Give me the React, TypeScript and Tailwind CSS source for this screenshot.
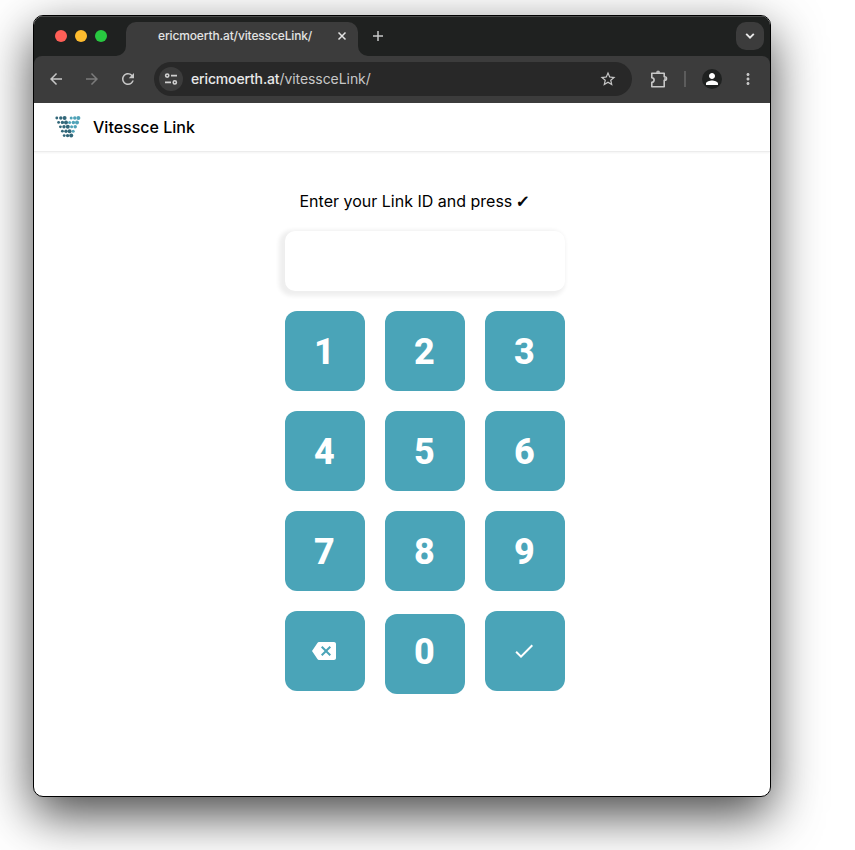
import React from "react";
import { MdBackspace, MdCheck, MdArrowBack, MdArrowForward, MdRefresh, MdStarBorder, MdMoreVert, MdPerson } from "react-icons/md";

const logoRows: [number, number[], number[]][] = [
  [2, [1.8, 5.8, 9.6], [16.2, 19.8, 23.4]],
  [6.4, [3.6, 7.4, 11], [14.6, 18.4, 22]],
  [10.8, [5.4, 9, 12.8], [16.6, 20.2]],
  [15.2, [7.4, 11, 14.6], [18.2]],
  [19.6, [9.2, 12.6, 16.2], []],
];

function Logo() {
  return (
    <svg width="26" height="22" viewBox="0 0 26 22">
      {logoRows.map(([y, dark, light]) => (
        <g key={y}>
          {dark.map((x, i) => (
            <circle key={x} cx={x} cy={y} r={1.4 + i * 0.3} fill="#326779" />
          ))}
          {light.map((x, i) => (
            <circle key={x} cx={x} cy={y} r={1.5 + i * 0.25} fill="#50a3b8" />
          ))}
        </g>
      ))}
    </svg>
  );
}

function TabStrip() {
  return (
    <div className="flex h-10 bg-[#1f2120] shadow-[inset_0_1px_0_#4a4b4a]">
      <div className="mt-[14px] ml-[21px] flex h-3 gap-2">
        <span className="size-3 rounded-full bg-[#ff5f57]" />
        <span className="size-3 rounded-full bg-[#febc2e]" />
        <span className="size-3 rounded-full bg-[#28c840]" />
      </div>
      <div className="ml-[9px] flex h-10 items-end">
        <svg width="10" height="10" viewBox="0 0 10 10" fill="#3c3c3c">
          <path d="M10 0v10H0A10 10 0 0 0 10 0z" />
        </svg>
      </div>
      <div className="mt-[6px] flex h-[34px] w-[232px] rounded-t-[10px] bg-[#3c3c3c] text-[#e3e3e3]">
        <span className="ml-8 w-[178px] text-[12px] leading-[28px] font-medium tracking-[-0.14px] whitespace-nowrap">ericmoerth.at/vitessceLink/</span>
        <svg className="mt-[9px]" width="12" height="12" viewBox="0 0 12 12" stroke="#e3e3e3" strokeWidth="1.5">
          <path d="M2.5 1.5l7 7M9.5 1.5l-7 7" />
        </svg>
      </div>
      <div className="flex h-10 items-end">
        <svg width="10" height="10" viewBox="0 0 10 10" fill="#3c3c3c">
          <path d="M0 0v10h10A10 10 0 0 1 0 0z" />
        </svg>
      </div>
      <svg className="mt-[14px] ml-1" width="12" height="12" viewBox="0 0 12 12" stroke="#c7c7c7" strokeWidth="1.5">
        <path d="M6 1v10M1 6h10" />
      </svg>
      <div className="mt-[6px] mr-[6px] ml-auto grid size-7 place-items-center rounded-[10px] bg-[#3c3c3c]">
        <svg width="10" height="8" viewBox="0 0 10 8" fill="none" stroke="#e8e8e8" strokeWidth="1.9">
          <path d="M1.2 1.8L5 5.6l3.8-3.8" />
        </svg>
      </div>
    </div>
  );
}

function Toolbar() {
  return (
    <div className="bg-[#1f2120]">
      <div className="flex h-[47px] items-center rounded-t-[8px] bg-[#3c3c3c] pb-px text-[#c7c7c7]">
        <MdArrowBack className="ml-[13px]" size={18} />
        <MdArrowForward className="ml-[18px] text-[#7b7b7b]" size={18} />
        <MdRefresh className="ml-[18px]" size={18} />
        <div className="ml-[17px] flex h-[34px] w-[478px] items-center rounded-full bg-[#282828]">
          <div className="ml-[5px] grid size-6 place-items-center rounded-full bg-[#3c3c3c]">
            <svg width="14" height="12" viewBox="0 0 14 12" fill="none" stroke="#d0d0d0" strokeWidth="1.6">
              <circle cx="3.2" cy="2.6" r="1.6" />
              <path d="M7 2.6h6M1 9.4h6" />
              <circle cx="10.8" cy="9.4" r="1.6" />
            </svg>
          </div>
          <span className="ml-2 text-[14px] leading-5 tracking-[-0.06px] whitespace-nowrap text-[#c7c7c7]">
            <span className="font-medium tracking-[-0.15px] text-[#e8e8e8]">ericmoerth.at</span>/vitessceLink/
          </span>
          <MdStarBorder className="mr-[15px] ml-auto" size={18} />
        </div>
        <svg className="ml-[17px]" width="20" height="20" viewBox="0 0 20 20" fill="none" stroke="#c7c7c7" strokeWidth="1.6">
          <path d="M2.8 4.3h12.4v3.4h.5a1.3 1.3 0 0 1 0 3.6h-.5v6.4H2.8v-4.4a2.3 2.3 0 0 0 0-4.6z" strokeLinejoin="round" />
          <path d="M7.4 3.6a1.7 1.7 0 0 1 3.4 0zM15.6 8.6a1.4 1.4 0 0 1 0 2.6z" fill="#c7c7c7" strokeWidth=".6" />
        </svg>
        <span className="ml-[15px] h-4 w-[2px] bg-[#5c5c5c]" />
        <span className="ml-4 grid size-5 place-items-center rounded-full bg-[#1f2120] text-white">
          <MdPerson size={18} />
        </span>
        <MdMoreVert className="ml-[17px]" size={18} />
      </div>
    </div>
  );
}

const digitKeys = ["1", "2", "3", "4", "5", "6", "7", "8", "9"];
const keyClass = "flex size-20 items-center justify-center rounded-[12px] bg-[#4aa4b8] text-white";

function Keypad() {
  return (
    <div className="mt-5 ml-[251px] grid w-[280px] grid-cols-3 gap-5 font-[Roboto,sans-serif] text-[36px] leading-none font-extrabold">
      {digitKeys.map((d) => (
        <button key={d} className={keyClass}>
          <span className="mt-px mr-px">{d}</span>
        </button>
      ))}
      <button className={keyClass}>
        <MdBackspace className="mr-[2px]" size={24} />
      </button>
      <button className="mt-[3px] flex size-20 items-center justify-center rounded-[12px] bg-[#4aa4b8] text-white">
        <span className="mr-px mb-[5px]">0</span>
      </button>
      <button className={keyClass}>
        <MdCheck className="mr-[2px]" size={24} />
      </button>
    </div>
  );
}

export default function App() {
  return (
    <div className="h-[850px] w-[855px] overflow-hidden bg-white pt-[15px] pl-[33px] font-[Inter,sans-serif]">
      <div className="h-[782px] w-[738px] overflow-hidden rounded-[10px] border border-black bg-white shadow-[0_18px_50px_rgba(0,0,0,0.72)]">
        <TabStrip />
        <Toolbar />
        <header className="flex h-[49px] items-center border-b border-[#ececec] shadow-[0_1px_2px_rgba(0,0,0,0.05)]">
          <div className="ml-[21px]">
            <Logo />
          </div>
          <h1 className="ml-3 text-[16px] font-medium whitespace-nowrap text-black">Vitessce Link</h1>
        </header>
        <main>
          <p className="mt-[37px] ml-[265.5px] h-6 text-[16px] leading-6 whitespace-nowrap text-black">
            Enter your Link ID and press <span className="-ml-px inline-block -skew-x-6 font-['DejaVu_Sans',sans-serif] leading-none font-bold [-webkit-text-stroke:0.8px_black]">✓</span>
          </p>
          <div className="mt-[18px] ml-[251px] h-[60px] w-[280px] rounded-[10px] bg-white shadow-[-3px_2px_4px_3px_rgba(0,0,0,0.065)]" />
          <Keypad />
        </main>
      </div>
    </div>
  );
}
